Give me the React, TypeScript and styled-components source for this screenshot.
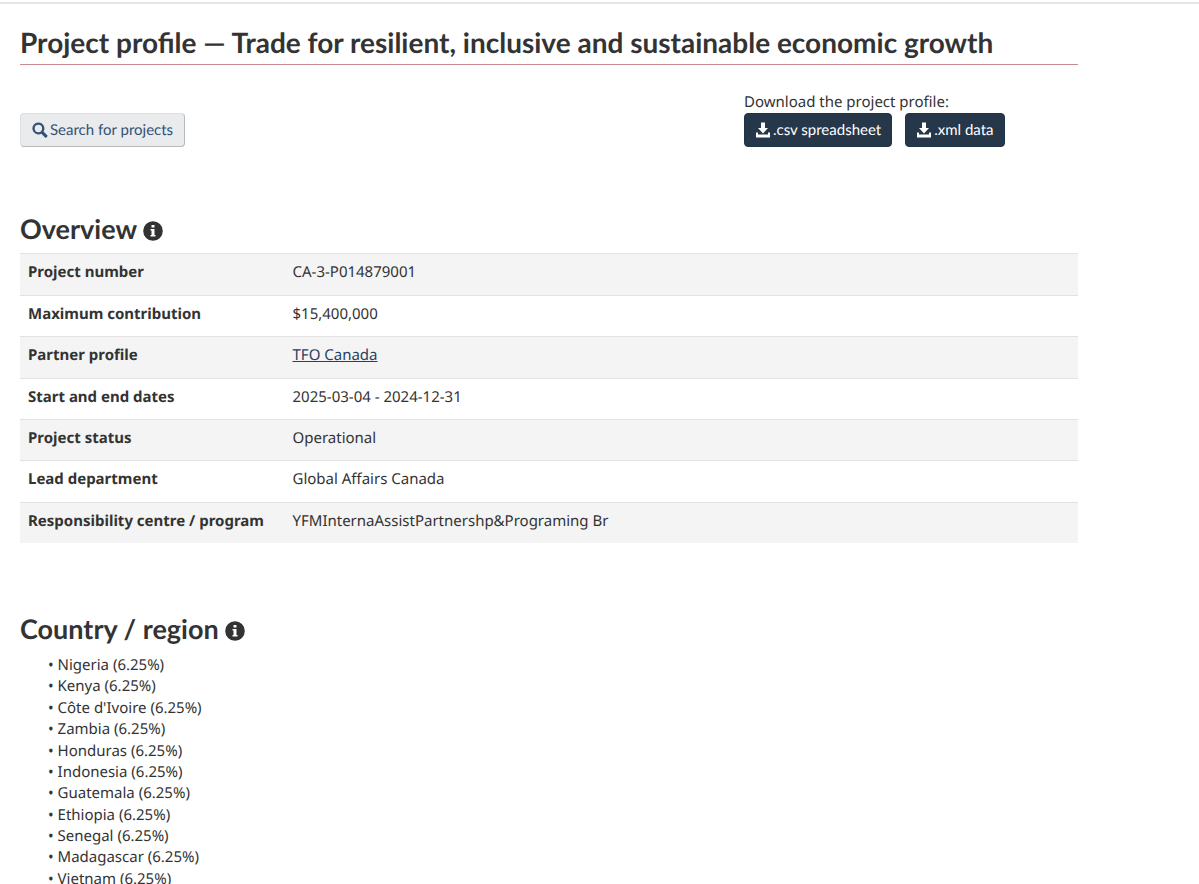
import React from "react";
import styled, { createGlobalStyle } from "styled-components";

const GlobalStyle = createGlobalStyle`
  *, *::before, *::after { box-sizing: border-box; }
  body {
    margin: 0;
    background: #fff;
    color: #333;
    font: 15px/1.425 "Noto Sans", sans-serif;
    text-rendering: geometricPrecision;
  }
`;

const Page = styled.div`
  padding-top: 2px;
`;

const Main = styled.main`
  border-top: 2px solid #e5e5e5;
`;

const Content = styled.div`
  max-width: 1078px;
  padding: 21px 0 0 20px;
`;

const Title = styled.h1`
  margin: 0;
  padding-bottom: 5px;
  border-bottom: 1px solid #c98a8d;
  font: 700 28px/34px Lato, sans-serif;
`;

const Actions = styled.div`
  display: grid;
  grid-template-columns: 1fr 334px;
  align-items: end;
  margin-top: 27px;
`;

const Prompt = styled.p`
  margin: 0;
`;

const Downloads = styled.div`
  display: flex;
  gap: 13px;
`;

const Button = styled.button<{ $primary?: boolean }>`
  display: inline-flex;
  align-items: center;
  justify-self: start;
  gap: 2px;
  height: 34px;
  padding: 0 ${(p) => (p.$primary ? 10 : 11)}px;
  border: 1px solid ${(p) => (p.$primary ? "#1f3347" : "#dcdee1")};
  border-bottom-color: ${(p) => (p.$primary ? "#1f3347" : "#b8babc")};
  border-right-color: ${(p) => (p.$primary ? "#1f3347" : "#b8babc")};
  border-radius: 4px;
  background: ${(p) => (p.$primary ? "#26374a" : "#eaebed")};
  color: ${(p) => (p.$primary ? "#fff" : "#335075")};
  font: 15px/20px Lato, sans-serif;
  text-rendering: inherit;
  white-space: nowrap;
  cursor: pointer;
`;

const Section = styled.section`
  padding-top: 64px;
`;

const Heading = styled.h2`
  display: flex;
  align-items: center;
  gap: 6px;
  margin: 0 0 6px;
  font: 700 27px/36px Lato, sans-serif;

  svg { margin-top: 3px; }
`;

const Table = styled.table`
  width: 100%;
  margin-bottom: 4px;
  border-collapse: separate;
  border-spacing: 0;
  table-layout: fixed;
  text-align: left;

  th, td {
    padding: 8px 8px 11px;
    border-top: 1px solid #e2e2e2;
    vertical-align: top;
  }
  th { width: 25%; white-space: nowrap; }
  tr:nth-child(odd) { background: #f4f4f4; }
`;

const Link = styled.a`
  color: #284162;
`;

const List = styled.ul`
  margin: 0;
  padding: 2px 0 0 28px;
  list-style: none;

  li::before { content: "• "; }
`;

const Icon = styled.svg`
  flex: none;
  fill: currentColor;
`;

const SearchIcon = () => (
  <Icon width="16" height="16" viewBox="0 0 16 16" aria-hidden="true">
    <path fillRule="evenodd" d="M6.4.5a6 6 0 0 1 5.1 9.1l3.7 3.6c.5.5.5.9 0 1.4l-.8.8c-.5.5-.9.5-1.4 0l-3.6-3.7A6 6 0 1 1 6.4.5Zm0 2.3a3.7 3.7 0 1 0 0 7.4 3.7 3.7 0 0 0 0-7.4Z" />
  </Icon>
);

const DownloadIcon = () => (
  <Icon width="16" height="16" viewBox="0 0 16 16" aria-hidden="true">
    <path d="M6 .5h4V6h3l-5 5.5L3 6h3Z" />
    <path d="M1 10.5h2v2h10v-2h2v5H1Z" />
  </Icon>
);

const InfoIcon = () => (
  <Icon width="20" height="20" viewBox="0 0 20 20" role="img" aria-label="Information">
    <path fillRule="evenodd" d="M10 .2a9.8 9.8 0 1 1 0 19.6A9.8 9.8 0 0 1 10 .2ZM8.5 4v2.5h3V4Zm-1 4v1.5h1v4.5h-1v1.5h5V14h-1V8Z" />
  </Icon>
);

const overview: [string, React.ReactNode][] = [
  ["Project number", "CA-3-P014879001"],
  ["Maximum contribution", "$15,400,000"],
  ["Partner profile", <Link href="#partner">TFO Canada</Link>],
  ["Start and end dates", "2025-03-04 - 2024-12-31"],
  ["Project status", "Operational"],
  ["Lead department", "Global Affairs Canada"],
  ["Responsibility centre / program", "YFMInternaAssistPartnershp&Programing Br"],
];

const countries = [
  "Nigeria", "Kenya", "Côte d'Ivoire", "Zambia", "Honduras", "Indonesia",
  "Guatemala", "Ethiopia", "Senegal", "Madagascar", "Vietnam",
];

export default function App() {
  return (
    <Page>
      <GlobalStyle />
      <Main>
        <Content>
          <Title>Project profile — Trade for resilient, inclusive and sustainable economic growth</Title>
          <Actions>
            <Button type="button"><SearchIcon />Search for projects</Button>
            <div>
              <Prompt>Download the project profile:</Prompt>
              <Downloads>
                <Button type="button" $primary><DownloadIcon />.csv spreadsheet</Button>
                <Button type="button" $primary><DownloadIcon />.xml data</Button>
              </Downloads>
            </div>
          </Actions>
          <Section>
            <Heading>Overview <InfoIcon /></Heading>
            <Table>
              <tbody>
                {overview.map(([label, value]) => (
                  <tr key={label}>
                    <th scope="row">{label}</th>
                    <td>{value}</td>
                  </tr>
                ))}
              </tbody>
            </Table>
          </Section>
          <Section>
            <Heading>Country / region <InfoIcon /></Heading>
            <List>
              {countries.map((name) => (
                <li key={name}>{name} (6.25%)</li>
              ))}
            </List>
          </Section>
        </Content>
      </Main>
    </Page>
  );
}
